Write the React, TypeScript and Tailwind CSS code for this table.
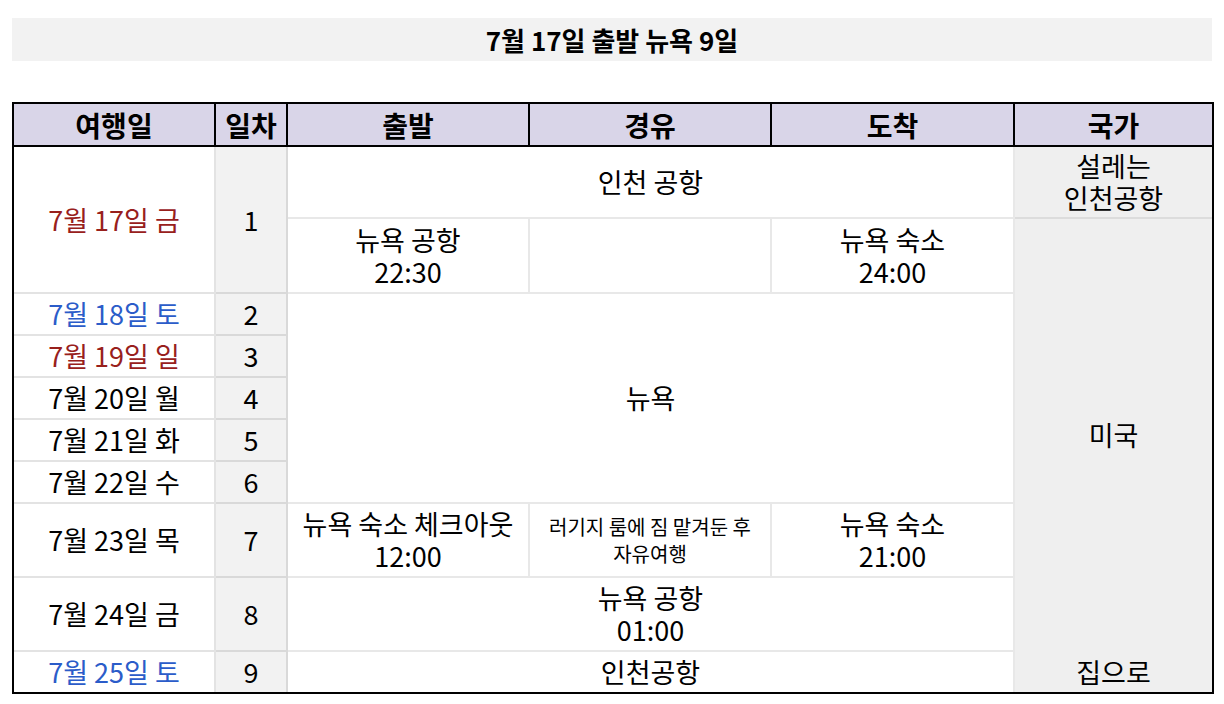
import React from 'react';

const font = { fontFamily: '"Noto Sans CJK KR", "Noto Sans", sans-serif' };

const RED = 'text-[#98201c]';
const BLUE = 'text-[#2b5cc9]';

type Day = { date: string; color: string; n: number; h: string };

const Td: React.FC<{
  children?: React.ReactNode;
  className?: string;
  colSpan?: number;
  rowSpan?: number;
}> = ({ children, className = '', colSpan, rowSpan }) => (
  <td
    colSpan={colSpan}
    rowSpan={rowSpan}
    className={`p-0 text-center align-middle border-solid ${className}`}
  >
    {children}
  </td>
);

const dateCell = 'border-r-2 border-b-2 border-[#e3e3e3] bg-white';
const numCell = 'border-r-2 border-b-2 border-[#d9d9d9] bg-[#f2f2f2]';
const bodyCell = 'border-r-2 border-b-2 border-[#e8e8e8] bg-white';
const nationCell = 'border-b-2 border-[#dcdcdc] bg-[#efefef]';

const midDays: Day[] = [
  { date: '7월 19일 일', color: RED, n: 3, h: 'h-[42px]' },
  { date: '7월 20일 월', color: 'text-black', n: 4, h: 'h-[42px]' },
  { date: '7월 21일 화', color: 'text-black', n: 5, h: 'h-[42px]' },
  { date: '7월 22일 수', color: 'text-black', n: 6, h: 'h-[42px]' },
];

export default function App() {
  return (
    <div className="w-[1224px] h-[704px] bg-white text-black px-3 pt-[18px]" style={font}>
      <div className="h-[43px] bg-[#f2f2f2] flex items-center justify-center text-[26px] font-bold leading-none">
        7월 17일 출발 뉴욕 9일
      </div>

      <table className="mt-[41px] w-[1202px] table-fixed border-separate border-spacing-0 border-2 border-black text-[27px] leading-[32px]">
        <colgroup>
          <col className="w-[202px]" />
          <col className="w-[72px]" />
          <col className="w-[242px]" />
          <col className="w-[242px]" />
          <col className="w-[243px]" />
          <col />
        </colgroup>
        <thead>
          <tr className="h-[43px] bg-[#d9d5e8] font-bold text-[28px]">
            {['여행일', '일차', '출발', '경유', '도착'].map((t) => (
              <Td key={t} className="border-r-2 border-b-2 border-black">
                {t}
              </Td>
            ))}
            <Td className="border-b-2 border-black">국가</Td>
          </tr>
        </thead>
        <tbody>
          <tr className="h-[72px]">
            <Td rowSpan={2} className={`${dateCell} ${RED}`}>
              7월 17일 금
            </Td>
            <Td rowSpan={2} className={numCell}>
              1
            </Td>
            <Td colSpan={3} className={bodyCell}>
              인천 공항
            </Td>
            <Td className={nationCell}>
              설레는
              <br />
              인천공항
            </Td>
          </tr>
          <tr className="h-[75px]">
            <Td className={bodyCell}>
              뉴욕 공항
              <br />
              22:30
            </Td>
            <Td className={bodyCell} />
            <Td className={bodyCell}>
              뉴욕 숙소
              <br />
              24:00
            </Td>
            <Td rowSpan={8} className="bg-[#efefef] border-b-2 border-[#efefef]">
              미국
            </Td>
          </tr>
          <tr className="h-[42px]">
            <Td className={`${dateCell} ${BLUE}`}>7월 18일 토</Td>
            <Td className={numCell}>2</Td>
            <Td colSpan={3} rowSpan={5} className={bodyCell}>
              뉴욕
            </Td>
          </tr>
          {midDays.map((d) => (
            <tr key={d.n} className={d.h}>
              <Td className={`${dateCell} ${d.color}`}>{d.date}</Td>
              <Td className={numCell}>{d.n}</Td>
            </tr>
          ))}
          <tr className="h-[74px]">
            <Td className={dateCell}>7월 23일 목</Td>
            <Td className={numCell}>7</Td>
            <Td className={bodyCell}>
              뉴욕 숙소 체크아웃
              <br />
              12:00
            </Td>
            <Td className={`${bodyCell} text-[20px] leading-[27px]`}>
              러기지 룸에 짐 맡겨둔 후
              <br />
              자유여행
            </Td>
            <Td className={bodyCell}>
              뉴욕 숙소
              <br />
              21:00
            </Td>
          </tr>
          <tr className="h-[74px]">
            <Td className={dateCell}>7월 24일 금</Td>
            <Td className={numCell}>8</Td>
            <Td colSpan={3} className={bodyCell}>
              뉴욕 공항
              <br />
              01:00
            </Td>
          </tr>
          <tr className="h-[40px]">
            <Td className={`border-r-2 border-[#e3e3e3] bg-white ${BLUE}`}>7월 25일 토</Td>
            <Td className="border-r-2 border-[#d9d9d9] bg-[#f2f2f2]">9</Td>
            <Td colSpan={3} className="border-r-2 border-[#e8e8e8] bg-white">
              인천공항
            </Td>
            <Td className="bg-[#efefef]">집으로</Td>
          </tr>
        </tbody>
      </table>
    </div>
  );
}
